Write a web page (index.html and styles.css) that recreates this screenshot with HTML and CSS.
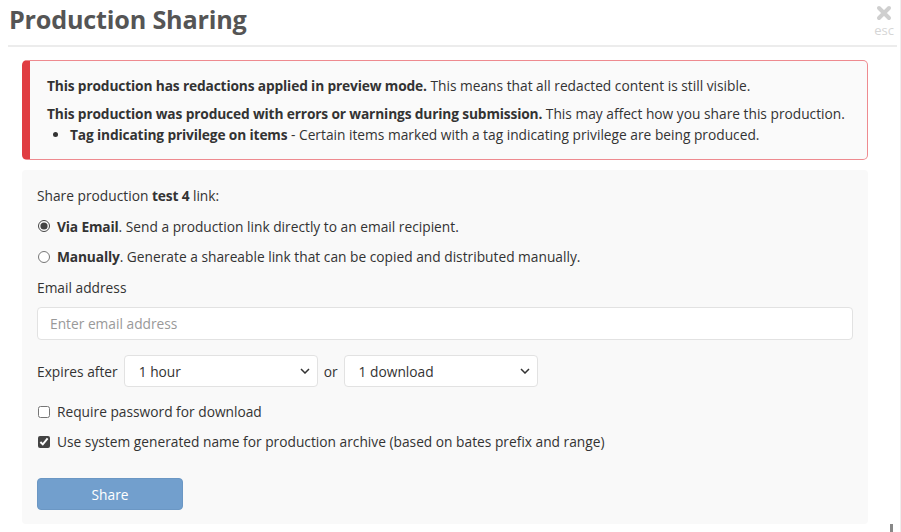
FILE: index.html
```html
<!DOCTYPE html>
<html lang="en">
<head>
    <meta charset="UTF-8">
    <title>Production Sharing</title>
    <link rel="stylesheet" href="styles.css">
</head>
<body>
    <div class="modal">
        <div class="modal-header">
            <h1>Production Sharing</h1>
            <div class="close">
                <svg width="16" height="16" viewBox="0 0 16 16">
                    <path d="M3 3 L13 13 M13 3 L3 13" stroke="#cfcfcf" stroke-width="4" stroke-linecap="round"/>
                </svg>
                <span>esc</span>
            </div>
        </div>
        <div class="modal-body">
            <div class="alert">
                <p><b>This production has redactions applied in preview mode.</b> This means that all redacted content is still visible.</p>
                <p class="second"><b>This production was produced with errors or warnings during submission.</b> This may affect how you share this production.</p>
                <ul>
                    <li><b>Tag indicating privilege on items</b> - Certain items marked with a tag indicating privilege are being produced.</li>
                </ul>
            </div>

            <form class="share-form">
                <div class="row">Share production <b>test 4</b> link:</div>
                <label class="row option">
                    <input type="radio" name="mode" checked>
                    <span><b>Via Email</b>. Send a production link directly to an email recipient.</span>
                </label>
                <label class="row option">
                    <input type="radio" name="mode">
                    <span><b>Manually</b>. Generate a shareable link that can be copied and distributed manually.</span>
                </label>
                <div class="row">Email address</div>
                <input class="text-input" type="text" placeholder="Enter email address">
                <div class="expires">
                    <span>Expires after</span>
                    <div class="select-wrap">
                        <select><option>1 hour</option></select>
                        <svg width="10" height="6" viewBox="0 0 10 6"><path d="M1 1 L5 5 L9 1" fill="none" stroke="#333" stroke-width="1.5"/></svg>
                    </div>
                    <span>or</span>
                    <div class="select-wrap">
                        <select><option>1 download</option></select>
                        <svg width="10" height="6" viewBox="0 0 10 6"><path d="M1 1 L5 5 L9 1" fill="none" stroke="#333" stroke-width="1.5"/></svg>
                    </div>
                </div>
                <label class="row option check">
                    <input type="checkbox">
                    <span>Require password for download</span>
                </label>
                <label class="row option check">
                    <input type="checkbox" checked>
                    <span>Use system generated name for production archive (based on bates prefix and range)</span>
                </label>
                <button type="button" class="share-btn">Share</button>
            </form>
        </div>
    </div>
    <div class="scroll-mark"></div>
</body>
</html>
```

FILE: styles.css
```css
* {
    box-sizing: border-box;
}
body {
    margin: 0;
    background: #fff;
    font-family: 'Open Sans', 'Noto Sans', sans-serif;
    font-size: 13.75px;
    color: #333;
    overflow: hidden;
}
b {
    letter-spacing: -0.15px;
}
.modal {
    width: 901px;
    height: 532px;
    border-right: 1px solid #eee;
}
.modal-header {
    display: flex;
    justify-content: space-between;
    align-items: flex-start;
    margin: 0 3px 0 8px;
    height: 47px;
    border-bottom: 2px solid #ececec;
}
.modal-header h1 {
    margin: 2px 0 0 1px;
    font-size: 25.2px;
    font-weight: 700;
    color: #555;
    letter-spacing: -0.2px;
}
.close {
    display: flex;
    flex-direction: column;
    align-items: center;
    margin: 5px 3px 0 0;
    color: #d6d6d6;
    font-size: 13px;
    line-height: 15px;
}
.close span {
    margin-top: 2px;
}
.modal-body {
    margin: 13px 32px 0 22px;
}
.alert {
    background: #fafafa;
    border: 1px solid #ee8a8f;
    border-left: 8px solid #e03d42;
    border-radius: 5px;
    padding: 15px 6px 14px 17px;
}
.alert p {
    margin: 0;
    line-height: 20px;
    white-space: nowrap;
}
.alert p.second {
    margin-top: 8px;
}
.alert ul {
    margin: 1px 0 0 0;
    padding-left: 23px;
    line-height: 20px;
}
.share-form {
    margin-top: 10px;
    background: #f9f9f9;
    border-radius: 4px;
    padding: 15px 15px 14px 15px;
    width: 846px;
}
.row {
    line-height: 21px;
    margin-bottom: 9.5px;
}
.option {
    display: flex;
    align-items: center;
}
.option input {
    margin: 0 7px 0 1px;
    width: 12px;
    height: 12px;
    accent-color: #444;
}
.text-input {
    display: block;
    width: 100%;
    height: 33px;
    border: 1px solid #e2e2e2;
    border-radius: 4px;
    padding: 0 12px;
    font-family: inherit;
    font-size: 13.75px;
    color: #333;
    background: #fff;
}
.text-input::placeholder {
    color: #999;
}
.expires {
    display: flex;
    align-items: center;
    gap: 6px;
    margin: 15px 0 14px;
}
.select-wrap {
    position: relative;
}
.select-wrap select {
    appearance: none;
    width: 194px;
    height: 32px;
    border: 1px solid #e2e2e2;
    border-radius: 4px;
    padding: 0 14px;
    background: #fff;
    font-family: inherit;
    font-size: 13.75px;
    color: #333;
}
.select-wrap svg {
    position: absolute;
    right: 8px;
    top: 13px;
    pointer-events: none;
}
.check {
    margin-bottom: 9px;
}
.share-btn {
    display: block;
    margin-top: 26px;
    width: 146px;
    height: 32px;
    background: #729fcd;
    color: #fff;
    border: 1px solid #6b97c4;
    border-radius: 4px;
    font-family: inherit;
    font-size: 13.75px;
}
.scroll-mark {
    position: absolute;
    left: 890px;
    top: 524px;
    width: 3px;
    height: 8px;
    background: #888;
}
```
